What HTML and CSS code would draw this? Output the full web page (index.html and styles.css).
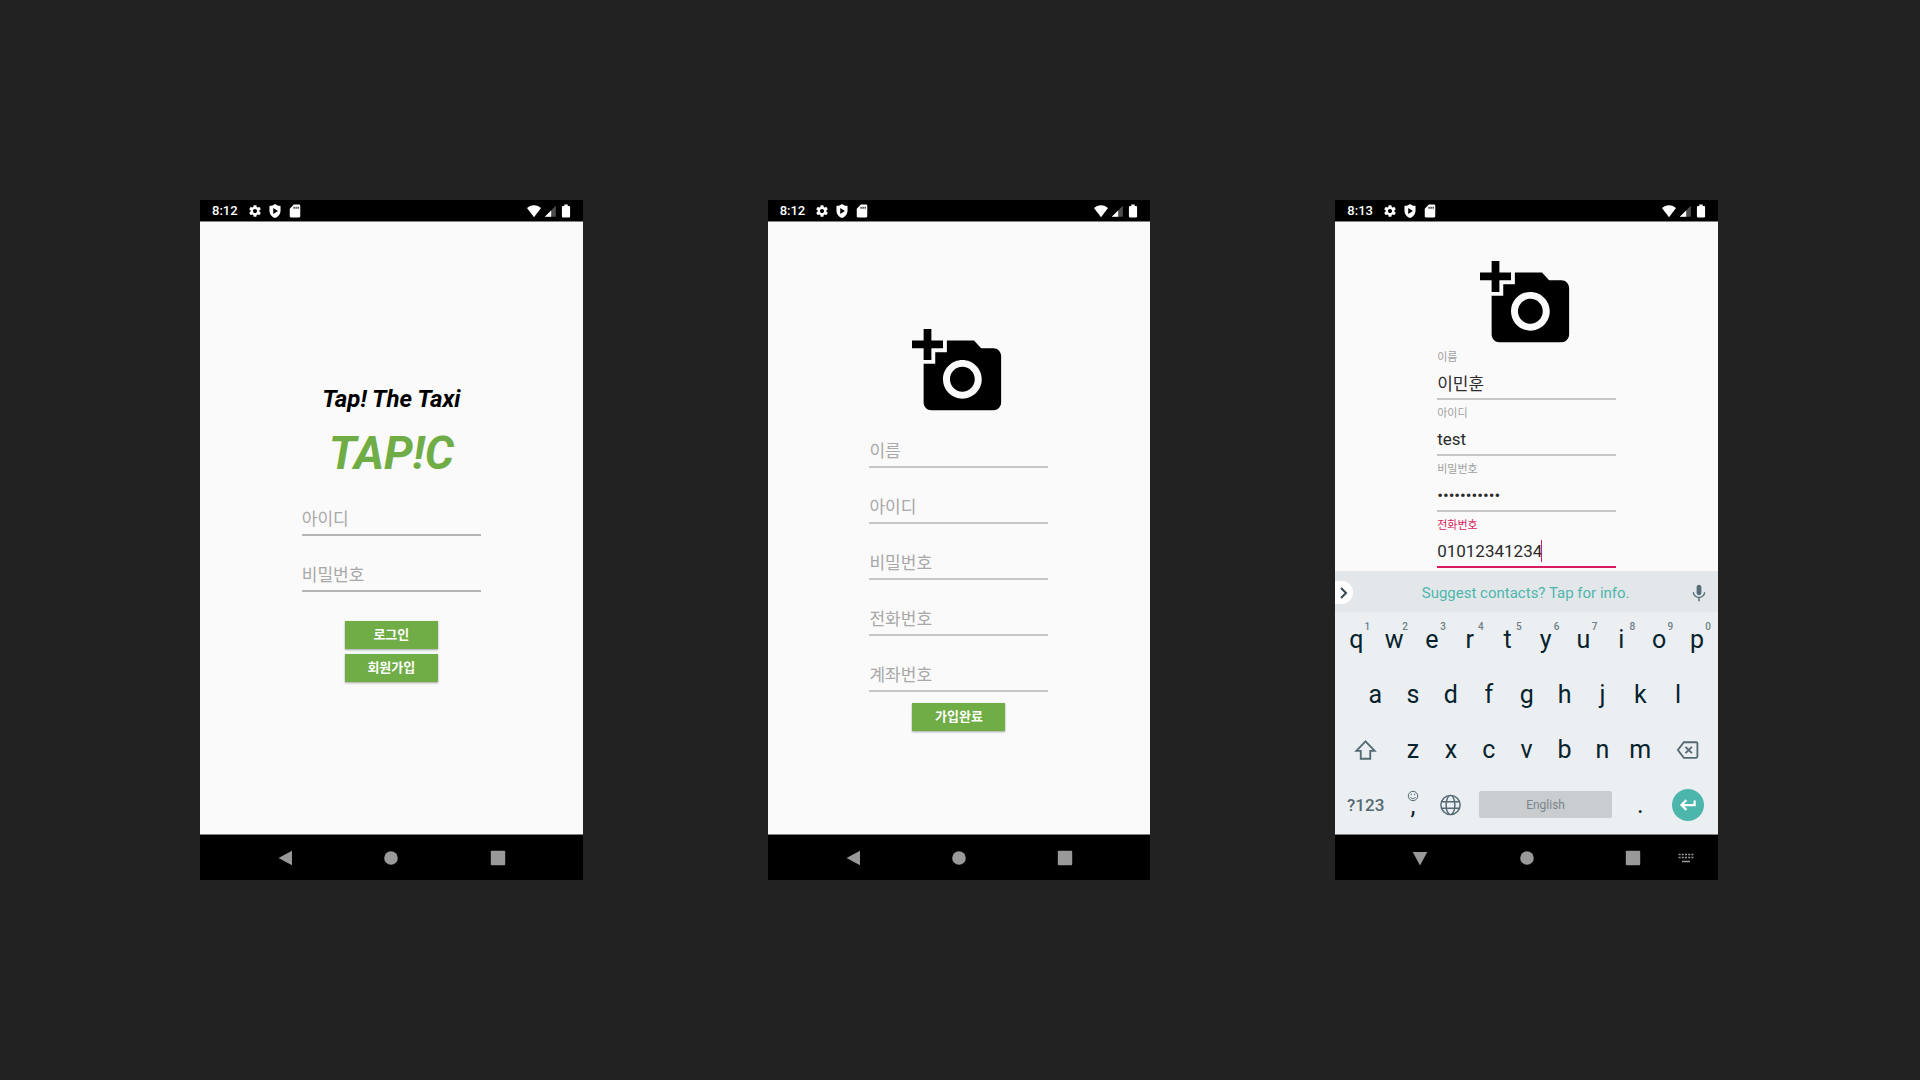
FILE: index.html
```html
<!DOCTYPE html>
<html lang="ko">
<head>
<meta charset="utf-8">
<meta name="viewport" content="width=device-width, initial-scale=1">
<title>TAP!C</title>
<link rel="stylesheet" href="styles.css">
</head>
<body>
<svg class="sprite" aria-hidden="true">
  <symbol id="gear" viewBox="0 0 24 24"><path d="M19.43 12.98c.04-.32.07-.64.07-.98s-.03-.66-.07-.98l2.110-1.650c.19-.15.24-.42.12-.64l-2-3.460c-.12-.22-.39-.3-.61-.22l-2.490 1c-.52-.4-1.080-.73-1.690-.98l-.38-2.650C14.460 2.180 14.250 2 14 2h-4c-.25 0-.46.18-.49.42l-.38 2.650c-.61.25-1.170.59-1.690.98l-2.490-1c-.23-.09-.49 0-.61.22l-2 3.460c-.13.22-.07.49.12.64l2.110 1.650c-.04.32-.07.65-.07.98s.03.66.07.98l-2.110 1.650c-.19.15-.24.42-.12.64l2 3.460c.12.22.39.3.61.22l2.490-1c.52.4 1.080.73 1.690.98l.38 2.650c.03.24.24.42.49.42h4c.25 0 .46-.18.49-.42l.38-2.650c.61-.25 1.170-.59 1.690-.98l2.490 1c.23.09.49 0 .61-.22l2-3.460c.12-.22.07-.49-.12-.64l-2.110-1.650zM12 15.500c-1.930 0-3.500-1.570-3.500-3.500s1.570-3.500 3.500-3.500 3.500 1.570 3.500 3.500-1.570 3.500-3.500 3.500z"/></symbol>
  <symbol id="shield" viewBox="0 0 24 24"><path fill-rule="evenodd" d="M12 0C9.500 2 6 3.200 2.500 3.500V11c0 6 4 11 9.500 13 5.500-2 9.500-7 9.500-13V3.500C18 3.200 14.500 2 12 0zM9 7l8 5-8 5z"/></symbol>
  <symbol id="sdcard" viewBox="0 0 24 24"><path fill-rule="evenodd" d="M19 1h-9L3 8v13c0 1.100.9 2 2 2h14c1.100 0 2-.9 2-2V3c0-1.100-.9-2-2-2zM9.500 4.500h1.800V8H9.500zm3.500 0h1.800V8H13zm3.500 0h1.800V8h-1.800z"/></symbol>
  <symbol id="wifi" viewBox="0 0 24 24"><path d="M12 22.500L0 7C3 4 7.300 2 12 2s9 2 12 5z"/></symbol>
  <symbol id="signal" viewBox="0 0 24 24"><path opacity=".3" d="M22 3v19H3z"/><path d="M14 11v11H3z"/></symbol>
  <symbol id="battery" viewBox="0 0 24 24"><path d="M17.500 3.500H15V1H9v2.500H6.500C5.700 3.500 5 4.200 5 5v16.500c0 .8.7 1.500 1.500 1.500h11c.8 0 1.500-.7 1.500-1.500V5c0-.8-.7-1.500-1.500-1.500z"/></symbol>
  <symbol id="camera" viewBox="0 0 24 24"><path d="M3 4V1h2v3h3v2H5v3H3V6H0V4h3zm3 6V7h3V4h7l1.830 2H21c1.100 0 2 .9 2 2v12c0 1.100-.9 2-2 2H5c-1.100 0-2-.9-2-2V10h3zm7 9c2.760 0 5-2.240 5-5s-2.240-5-5-5-5 2.240-5 5 2.240 5 5 5zm-3.200-5c0 1.770 1.430 3.200 3.200 3.200s3.200-1.430 3.200-3.200-1.430-3.200-3.200-3.200-3.200 1.430-3.200 3.200z"/></symbol>
  <symbol id="back" viewBox="0 0 16 16"><path d="M15 .7v14.600L1.500 8z"/></symbol>
  <symbol id="down" viewBox="0 0 16 16"><path d="M.7 2h14.600L8 15.500z"/></symbol>
  <symbol id="home" viewBox="0 0 16 16"><circle cx="8" cy="8" r="6.800"/></symbol>
  <symbol id="recent" viewBox="0 0 16 16"><rect x=".8" y=".8" width="14.400" height="14.400" rx="1"/></symbol>
</svg>

<main class="board">
  <section class="phone" aria-label="로그인 화면">
    <header class="status">
      <time class="clock">8:12</time>
      <svg><use href="#gear"/></svg><svg><use href="#shield"/></svg><svg><use href="#sdcard"/></svg>
      <span class="status-right"><svg><use href="#wifi"/></svg><svg><use href="#signal"/></svg><svg><use href="#battery"/></svg></span>
    </header>
    <div class="screen">
      <form class="form centered">
        <p class="tagline">Tap! The Taxi</p>
        <h1 class="logo">TAP!C</h1>
        <div class="field strong"><input type="text" placeholder="아이디" aria-label="아이디"></div>
        <div class="field strong"><input type="password" placeholder="비밀번호" aria-label="비밀번호"></div>
        <div class="actions spaced">
          <button class="btn" type="button">로그인</button>
          <button class="btn" type="button">회원가입</button>
        </div>
      </form>
    </div>
    <nav class="navbar">
      <button type="button" class="nav-back" aria-label="뒤로"><svg><use href="#back"/></svg></button>
      <button type="button" class="nav-home" aria-label="홈"><svg><use href="#home"/></svg></button>
      <button type="button" class="nav-recent" aria-label="최근 앱"><svg><use href="#recent"/></svg></button>
    </nav>
  </section>

  <section class="phone" aria-label="회원가입 화면">
    <header class="status">
      <time class="clock">8:12</time>
      <svg><use href="#gear"/></svg><svg><use href="#shield"/></svg><svg><use href="#sdcard"/></svg>
      <span class="status-right"><svg><use href="#wifi"/></svg><svg><use href="#signal"/></svg><svg><use href="#battery"/></svg></span>
    </header>
    <div class="screen">
      <form class="form centered">
        <button class="photo" type="button" aria-label="사진 추가"><svg><use href="#camera"/></svg></button>
        <div class="field"><input type="text" placeholder="이름" aria-label="이름"></div>
        <div class="field"><input type="text" placeholder="아이디" aria-label="아이디"></div>
        <div class="field"><input type="password" placeholder="비밀번호" aria-label="비밀번호"></div>
        <div class="field"><input type="tel" placeholder="전화번호" aria-label="전화번호"></div>
        <div class="field"><input type="text" placeholder="계좌번호" aria-label="계좌번호"></div>
        <div class="actions">
          <button class="btn" type="button">가입완료</button>
        </div>
      </form>
    </div>
    <nav class="navbar">
      <button type="button" class="nav-back" aria-label="뒤로"><svg><use href="#back"/></svg></button>
      <button type="button" class="nav-home" aria-label="홈"><svg><use href="#home"/></svg></button>
      <button type="button" class="nav-recent" aria-label="최근 앱"><svg><use href="#recent"/></svg></button>
    </nav>
  </section>

  <section class="phone" aria-label="회원가입 입력 화면">
    <header class="status">
      <time class="clock">8:13</time>
      <svg><use href="#gear"/></svg><svg><use href="#shield"/></svg><svg><use href="#sdcard"/></svg>
      <span class="status-right"><svg><use href="#wifi"/></svg><svg><use href="#signal"/></svg><svg><use href="#battery"/></svg></span>
    </header>
    <div class="screen">
      <form class="form scrolled">
        <button class="photo" type="button" aria-label="사진 추가"><svg><use href="#camera"/></svg></button>
        <div class="field"><label for="name">이름</label><input id="name" type="text" value="이민훈"></div>
        <div class="field"><label for="userid">아이디</label><input id="userid" type="text" value="test"></div>
        <div class="field"><label for="pw">비밀번호</label><input id="pw" type="password" value="testtest123"></div>
        <div class="field active"><label for="tel">전화번호</label><input id="tel" type="tel" value="01012341234"><span class="caret"></span></div>
      </form>
      <div class="suggest">
        <button type="button" class="expand" aria-label="펼치기"><svg viewBox="0 0 12 12"><path d="M3 1l5 5-5 5"/></svg></button>
        <a class="suggest-text" href="#">Suggest contacts? Tap for info.</a>
        <button type="button" class="mic" aria-label="음성 입력"><svg viewBox="0 0 24 24"><path d="M12 15c1.900 0 3.200-1.500 3.200-3.300V4.300C15.200 2.500 13.900 1 12 1S8.800 2.500 8.800 4.300v7.400C8.800 13.500 10.100 15 12 15zm6.500-4c0 3.500-3 6-6.500 6s-6.500-2.500-6.500-6H3.600c0 4 3.100 7.100 7.400 7.700V23h2v-4.300c4.300-.6 7.400-3.700 7.400-7.700z"/></svg></button>
      </div>
      <div class="keyboard">
        <div class="keys">
          <button type="button">q<sup>1</sup></button><button type="button">w<sup>2</sup></button><button type="button">e<sup>3</sup></button><button type="button">r<sup>4</sup></button><button type="button">t<sup>5</sup></button><button type="button">y<sup>6</sup></button><button type="button">u<sup>7</sup></button><button type="button">i<sup>8</sup></button><button type="button">o<sup>9</sup></button><button type="button">p<sup>0</sup></button>
        </div>
        <div class="keys inset">
          <button type="button">a</button><button type="button">s</button><button type="button">d</button><button type="button">f</button><button type="button">g</button><button type="button">h</button><button type="button">j</button><button type="button">k</button><button type="button">l</button>
        </div>
        <div class="keys">
          <button type="button" class="wide" aria-label="Shift"><svg class="line-icon" viewBox="0 0 24 24"><path d="M12 2.500L2 13h4.800v8.500h10.400V13H22z"/></svg></button>
          <button type="button">z</button><button type="button">x</button><button type="button">c</button><button type="button">v</button><button type="button">b</button><button type="button">n</button><button type="button">m</button>
          <button type="button" class="wide" aria-label="Backspace"><svg class="line-icon" viewBox="0 0 24 24"><path d="M8 3.500h13.500c.8 0 1.300.5 1.300 1.300v14.400c0 .8-.5 1.300-1.300 1.300H8L1.500 12zM9.800 8.500l7 7m0-7l-7 7"/></svg></button>
        </div>
        <div class="keys">
          <button type="button" class="wide symbols">?123</button>
          <button type="button" class="comma" aria-label="쉼표, 이모지"><svg viewBox="0 0 12 12"><circle cx="6" cy="6" r="4.700"/><path d="M4.300 3.700v1.500m3.400-1.500v1.500M3.500 7c1 2.200 4 2.200 5 0"/></svg><span>,</span></button>
          <button type="button" aria-label="언어"><svg class="line-icon globe" viewBox="0 0 24 24"><circle cx="12" cy="12" r="10.500"/><ellipse cx="12" cy="12" rx="4.800" ry="10.500"/><path d="M2.500 8.500h19m-19 7h19"/></svg></button>
          <button type="button" class="space">English</button>
          <button type="button">.</button>
          <button type="button" class="wide enter" aria-label="Enter"><span><svg viewBox="0 0 24 24"><path d="M21.500 6v6H4m6.500-6.500L4 12l6.500 6.500"/></svg></span></button>
        </div>
      </div>
    </div>
    <nav class="navbar">
      <button type="button" class="nav-back" aria-label="키보드 닫기"><svg><use href="#down"/></svg></button>
      <button type="button" class="nav-home" aria-label="홈"><svg><use href="#home"/></svg></button>
      <button type="button" class="nav-recent" aria-label="최근 앱"><svg><use href="#recent"/></svg></button>
      <button type="button" class="nav-ime" aria-label="키보드 선택"><svg viewBox="0 0 16 12"><path stroke-dasharray="2 1.200" d="M.6 2.500h15M.6 5.500h15"/><path d="M4 9.500h8"/></svg></button>
    </nav>
  </section>
</main>
</body>
</html>
```

FILE: styles.css
```css
* { box-sizing: border-box; }

body {
  margin: 0;
  background: #222;
  font-family: Roboto, "Noto Sans CJK KR", sans-serif;
}

button, input { font: inherit; color: inherit; }
button { border: 0; padding: 0; background: none; cursor: pointer; }
svg { display: block; }
.sprite { position: absolute; width: 0; height: 0; }

.board {
  display: grid;
  grid-template-columns: repeat(3, minmax(0, 1fr));
  gap: 185px;
  align-content: center;
  min-height: 100vh;
  padding: 0 202px 0 200px;
}

.phone {
  display: flex;
  flex-direction: column;
  aspect-ratio: 9 / 16;
  background: #000;
}

/* Status bar */
.status {
  display: flex;
  align-items: center;
  gap: 6px;
  height: 21px;
  padding: 1px 10px 0 12px;
  color: #fff;
}
.status svg { width: 14px; height: 14px; fill: #fff; }
.clock { margin-right: 4px; font-size: 13px; font-weight: 500; line-height: 20px; }
.status-right { display: flex; gap: 2px; margin-left: auto; }

/* App screen */
.screen {
  display: flex;
  flex-direction: column;
  flex: 1;
  min-height: 0;
  overflow: hidden;
  border: solid #808080;
  border-width: 1px 0;
  background: #fafafa;
}

.form {
  display: flex;
  flex-direction: column;
  align-items: center;
  flex: 1;
  min-height: 0;
}
.centered { justify-content: center; padding-top: 5px; }
.scrolled { padding-top: 35px; overflow: hidden; }

.tagline {
  margin: 4px 0 0;
  color: #000;
  font-size: 24px;
  font-style: italic;
  font-weight: 700;
  line-height: 44px;
}
.logo {
  margin: 0;
  color: #70ad47;
  font-size: 46px;
  font-style: italic;
  font-weight: 700;
  line-height: 65px;
}

.photo { flex: none; }
.photo svg { width: 93px; height: 93px; }

.field {
  position: relative;
  display: flex;
  flex-direction: column;
  justify-content: flex-end;
  flex: none;
  width: 179px;
  height: 56px;
  padding-bottom: 6px;
}
.field label {
  height: 16px;
  color: #a0a0a0;
  font-size: 11px;
  line-height: 16px;
}
.field input {
  width: 100%;
  height: 34px;
  padding: 2px 0 0;
  border: 0;
  border-bottom: 2px solid #c6c6c6;
  border-radius: 0;
  outline: 0;
  background: none;
  color: #2a2a2a;
  font-size: 17px;
}
.field input::placeholder { color: #a8a8a8; opacity: 1; }
.field.strong input { border-color: #b4b4b4; }
.field.active label { color: #d81b60; }
.field.active input { border-color: #d81b60; }
.caret {
  position: absolute;
  top: 22px;
  left: 104px;
  width: 1px;
  height: 22px;
  background: #d81b60;
}

.actions {
  display: flex;
  flex-direction: column;
  gap: 5px;
  padding: 5px 0;
}
.spaced { padding-top: 23px; }
.btn {
  width: 93px;
  height: 28px;
  background: #70ad47;
  box-shadow: 0 1px 2px rgba(0, 0, 0, .35);
  color: #fff;
  font-size: 13px;
  font-weight: 700;
  line-height: 28px;
}

/* Suggestion strip */
.suggest {
  display: grid;
  grid-template-columns: 18px 1fr 38px;
  align-items: center;
  flex: none;
  height: 41px;
  padding-top: 2px;
  background: #e3e7ea;
}
.expand {
  display: flex;
  align-items: center;
  justify-content: center;
  height: 23px;
  border-radius: 0 12px 12px 0;
  background: #fff;
}
.expand svg { width: 12px; height: 12px; fill: none; stroke: #37474f; stroke-width: 2; }
.suggest-text {
  padding-left: 18px;
  color: #4db6ac;
  font-size: 15px;
  text-align: center;
  text-decoration: none;
}
.mic svg { width: 18px; height: 18px; margin: 0 auto; fill: #546e7a; }

/* Keyboard */
.keyboard {
  flex: none;
  padding: 0 2px 2px;
  background: #ebeff2;
  color: #06222c;
}
.keys {
  display: grid;
  grid-template-columns: repeat(20, minmax(0, 1fr));
  height: 55px;
}
.keys button {
  position: relative;
  display: flex;
  align-items: center;
  justify-content: center;
  grid-column: span 2;
  font-size: 25px;
}
.inset button:first-child { grid-column: 2 / span 2; }
.keys .wide { grid-column: span 3; }
.keys sup {
  position: absolute;
  top: 8px;
  right: 5px;
  color: #6f7f87;
  font-size: 10px;
  font-weight: 500;
  line-height: 14px;
}
.line-icon {
  width: 23px;
  height: 22px;
  fill: none;
  stroke: #546972;
  stroke-width: 2;
}
.globe { stroke-width: 1.600; }
.keys .symbols { color: #546972; font-size: 17px; font-weight: 500; }
.keys .comma { flex-direction: column; padding-bottom: 5px; }
.comma svg { flex: none; width: 12px; height: 12px; fill: none; stroke: #546972; }
.comma span { margin-top: -4px; line-height: 16px; }
.keys .space {
  grid-column: span 8;
  align-self: center;
  height: 27px;
  margin: 0 9px;
  border-radius: 2px;
  background: #c9cdd0;
  color: #7b858b;
  font-size: 12px;
}
.enter span {
  display: flex;
  align-items: center;
  justify-content: center;
  width: 32px;
  height: 32px;
  border-radius: 50%;
  background: #4db6ac;
}
.enter svg { width: 21px; height: 18px; fill: none; stroke: #fff; stroke-width: 3; }

/* System navigation */
.navbar {
  display: grid;
  grid-template-columns: 11fr repeat(6, 10fr) 1fr;
  height: 45px;
}
.navbar button { display: flex; align-items: center; justify-content: center; }
.navbar svg { width: 16px; height: 16px; fill: #999; }
.nav-back { grid-column: 2; }
.nav-home { grid-column: 4; }
.nav-recent { grid-column: 6; }
.nav-ime { grid-column: 7; }
.nav-ime svg { height: 12px; fill: none; stroke: #999; stroke-width: 1.500; }
```
